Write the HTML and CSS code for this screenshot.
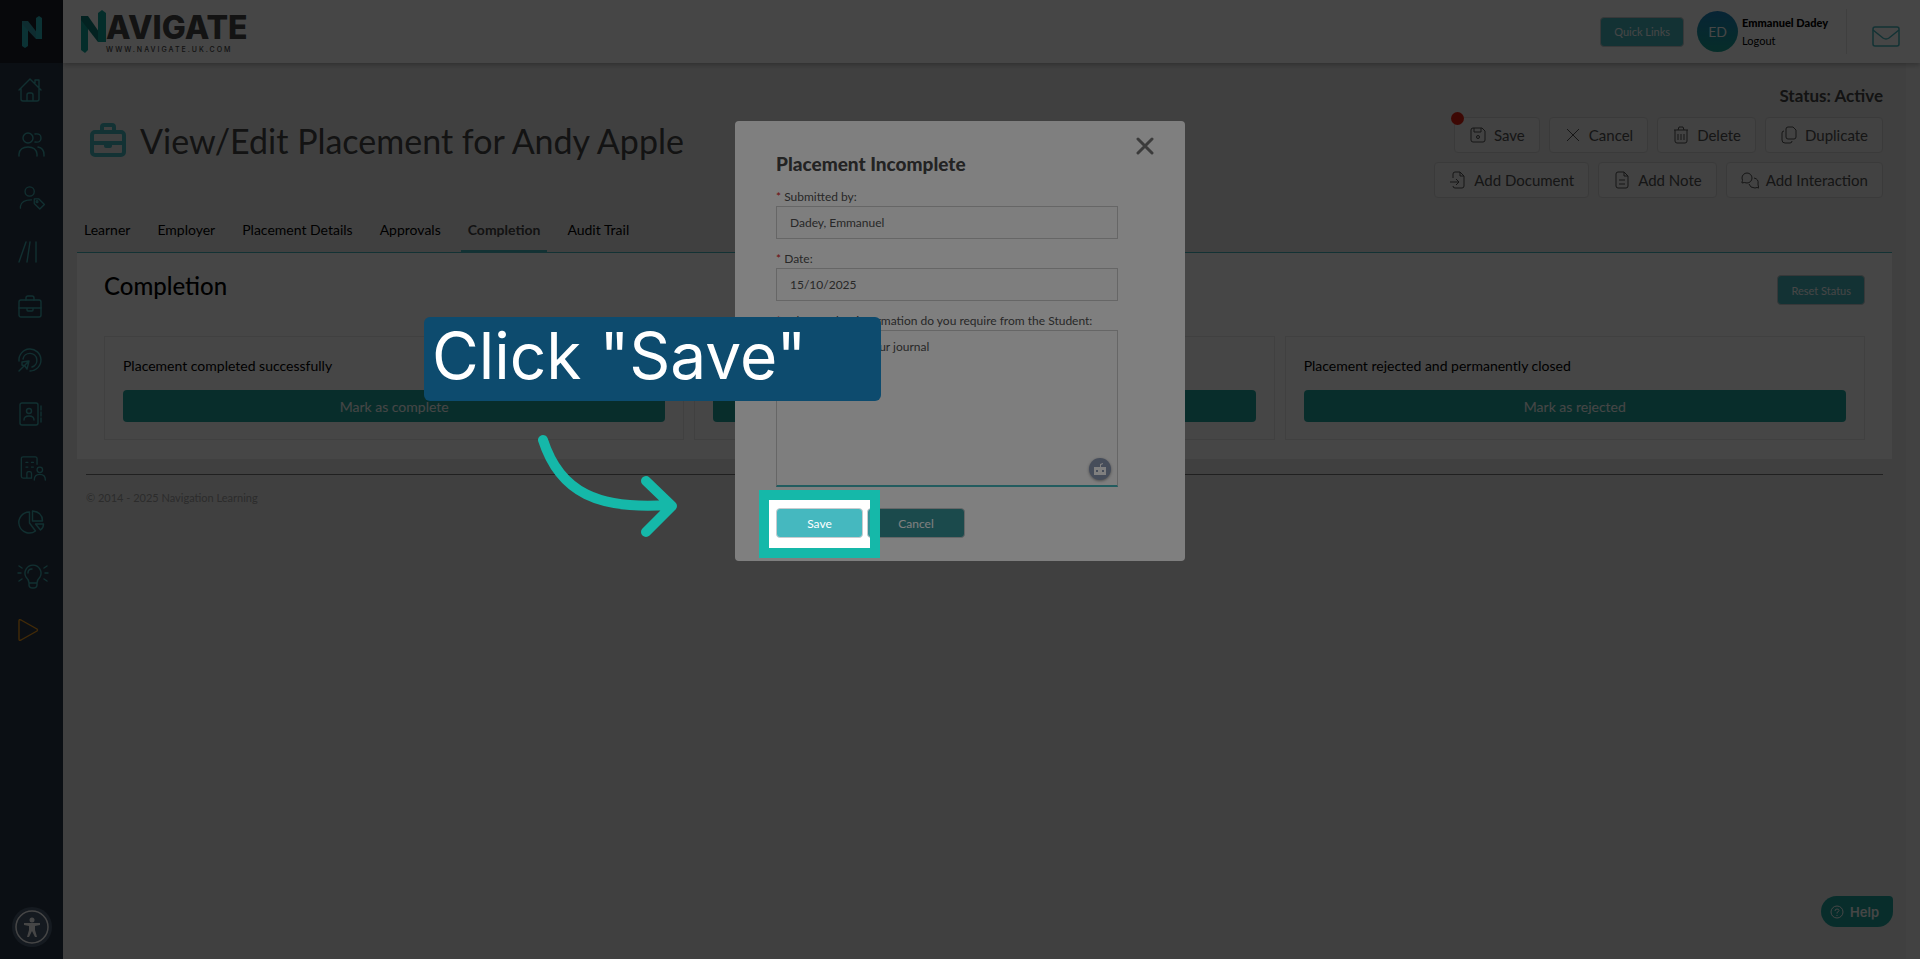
FILE: index.html
```
<!DOCTYPE html>
<html lang="en">
<head>
    <meta charset="UTF-8">
    <meta name="viewport" content="width=device-width, initial-scale=1.0">
    <title>Navigate - Placement</title>
    <link rel="stylesheet" href="styles.css">
</head>
<body>
    <nav class="sidebar">
        <a href="#" class="side-logo" aria-label="Navigate">
            <svg width="20" height="32" viewBox="0 0 20 32"><path fill="#2bb8c0" d="M0 5h6v25l-3 2-3-2z"/><path fill="#36a3b0" d="M0 5h6l14 18h-6L0 8z"/><path fill="#2bb8c0" d="M14 2l3-2 3 2v21h-6z"/></svg>
        </a>
        <a href="#" aria-label="Home"><svg viewBox="0 0 24 24"><path d="M1 12L12 1l11 11M3 10v11q0 2 2 2h14q2 0 2-2V10M9 23v-6q0-2 2-2h2q2 0 2 2v6M17 5V2h4v8"/></svg></a>
        <a href="#" aria-label="Users"><svg class="wide" viewBox="0 0 27 24"><circle cx="10" cy="6" r="5"/><path d="M1 24v-2q1-7 9-7t9 7v2M17 2q6-1 6 4t-6 4M20 15q6 1 6 8v1"/></svg></a>
        <a href="#" aria-label="Tags"><svg class="wide" viewBox="0 0 28 26"><circle cx="12" cy="6" r="5"/><path d="M2 24v-2q1-7 12-7M17 14h5l6 6-5 5-6-6z"/><circle cx="20" cy="17" r="1"/></svg></a>
        <a href="#" aria-label="Activities"><svg viewBox="0 0 24 24"><path d="M1 22L8 2M9 22L12 2M18 2v20"/></svg></a>
        <a href="#" aria-label="Placements"><svg viewBox="0 0 24 24"><rect x="1" y="6" width="22" height="17" rx="2"/><path d="M8 6V4q0-2 2-2h4q2 0 2 2v2M1 14h22M9 14v2q0 1 1 1h4q1 0 1-1v-2"/></svg></a>
        <a href="#" aria-label="Targets"><svg viewBox="0 0 24 24"><path d="M1 13A11 11 0 1 1 12 23M5 11a7 7 0 1 1 9 8M1 23l10-10M4 14l7-1-2 8-2-3-3-1z"/></svg></a>
        <a href="#" aria-label="Contacts"><svg viewBox="0 0 24 24"><rect x="2" y="1" width="18" height="22" rx="2"/><circle cx="11" cy="9" r="2.5"/><path d="M6 18q0-4 5-4t5 4M23 4v4M23 10v4M23 16v4"/></svg></a>
        <a href="#" aria-label="Employers"><svg class="wide" viewBox="0 0 28 26"><path d="M20 9V3q0-2-2-2H5Q3 1 3 3v19q0 2 2 2h9v-5q0-2-2-2h-1q-2 0-2 2v5M8 7h2M14 7h2M8 12h2M14 12h2"/><circle cx="23" cy="15" r="3"/><path d="M17 26q0-6 6-6t6 6"/></svg></a>
        <a href="#" aria-label="Reports"><svg class="wide" viewBox="0 0 26 24"><path d="M11 2a10.500 10.500 0 1 0 6 19l-6-8zM14 1v10h10Q24 2 14 1zM17 14h8q0 4-3 6z"/></svg></a>
        <a href="#" aria-label="Ideas"><svg class="bulb" viewBox="0 0 30 24"><path d="M11 19q0-3-3-6a8 8 0 1 1 14 0q-3 3-3 6zM11 19v2q0 3 4 3t4-3v-2M10 9q0-4 4-4M1 2l3 2M0 9h3M1 17l3-2M29 2l-3 2M30 9h-3M29 17l-3-2"/></svg></a>
        <a href="#" class="play" aria-label="Tour"><svg viewBox="0 0 24 24"><path d="M1 3q0-2 2-1l16 9q1 1 0 2L3 22q-2 1-2-1z"/></svg></a>
        <button class="access" aria-label="Accessibility">
            <svg width="40" height="40" viewBox="0 0 40 40"><circle cx="20" cy="20" r="16" fill="none" stroke="#fff" stroke-width="1.500"/><circle cx="20" cy="13" r="2.500" fill="#fff"/><path fill="#fff" d="M12 16h16v2l-5 1v4l2 7h-2l-3-6-3 6h-2l2-7v-4l-5-1z"/></svg>
        </button>
    </nav>

    <div class="page">
        <header class="topbar">
            <a href="#" class="brand">
                <svg width="25" height="44" viewBox="0 0 25 44"><path fill="#12a79c" d="M0 6h7v34l-3 3-4-3z"/><path fill="#0c7f78" d="M0 6h7l18 26h-8L0 10z"/><path fill="#12a79c" d="M17 3l4-3 4 3v29h-8z"/></svg>
                <span class="brand-text">
                    <span class="brand-name">AVIGATE</span>
                    <span class="brand-url">WWW.NAVIGATE.UK.COM</span>
                </span>
            </a>
            <button class="btn-small quick">Quick Links</button>
            <div class="avatar">ED</div>
            <div class="user">
                <strong>Emmanuel Dadey</strong>
                <a href="#">Logout</a>
            </div>
            <a href="#" class="mail" aria-label="Messages"><svg width="28" height="21" viewBox="0 0 28 21"><rect x="1" y="1" width="26" height="19" rx="2"/><path d="M1 4l10 8q3 2 6 0l10-8"/></svg></a>
        </header>

        <main class="content">
            <section class="heading">
                <h1>
                    <svg width="36" height="34" viewBox="0 0 36 34"><rect x="2" y="9" width="32" height="23" rx="3"/><path d="M12 8V4q0-2 2-2h8q2 0 2 2v4M2 20h32"/><path class="clasp" d="M14 20h8v3q0 2-2 2h-4q-2 0-2-2z"/></svg>
                    View/Edit Placement for Andy Apple
                </h1>
                <div class="tools">
                    <div class="status">Status: Active</div>
                    <div class="tool-row">
                        <button class="tool unsaved"><svg viewBox="0 0 18 18"><path d="M4 2h9l3 3v9q0 2-2 2H4q-2 0-2-2V4q0-2 2-2zM5 2v4h7V2"/><circle cx="9" cy="11" r="1.500"/></svg>Save</button>
                        <button class="tool"><svg viewBox="0 0 18 18"><path d="M3 3l12 12M15 3L3 15"/></svg>Cancel</button>
                        <button class="tool"><svg viewBox="0 0 18 18"><path d="M2 4h14M6 4l1-3h4l1 3M3 4v11q0 2 2 2h8q2 0 2-2V4M6 8v6M9 8v6M12 8v6"/></svg>Delete</button>
                        <button class="tool"><svg viewBox="0 0 18 18"><path d="M8 1h5l3 3v7q0 2-2 2H8q-2 0-2-2V3q0-2 2-2zM4 5Q2 5 2 7v7q0 3 3 3h5q2 0 2-2"/></svg>Duplicate</button>
                    </div>
                    <div class="tool-row">
                        <button class="tool"><svg viewBox="0 0 18 18"><path d="M4 7V3q0-2 2-2h5l4 4v10q0 2-2 2H6q-2 0-2-2M11 1v4h4M1 11h9M7 8l3 3-3 3"/></svg>Add Document</button>
                        <button class="tool"><svg viewBox="0 0 18 18"><path d="M5 1h6l4 4v10q0 2-2 2H5q-2 0-2-2V3q0-2 2-2zM11 1v4h4M6 9h6M6 13h6"/></svg>Add Note</button>
                        <button class="tool"><svg viewBox="0 0 18 18"><path d="M1 11q1-1 0-4a5 5 0 1 1 5 5q-3-1-5 0zM13 7q5 1 4 6 0 2 1 4-2-1-4 0-5 0-6-4"/></svg>Add Interaction</button>
                    </div>
                </div>
            </section>

            <nav class="tabs">
                <a href="#">Learner</a>
                <a href="#">Employer</a>
                <a href="#">Placement Details</a>
                <a href="#">Approvals</a>
                <a href="#" class="active">Completion</a>
                <a href="#">Audit Trail</a>
            </nav>

            <section class="panel">
                <div class="panel-head">
                    <h2>Completion</h2>
                    <button class="btn-small">Reset Status</button>
                </div>
                <div class="cards">
                    <div class="card">
                        <p>Placement completed successfully</p>
                        <button>Mark as complete</button>
                    </div>
                    <div class="card">
                        <p>Placement incomplete</p>
                        <button>Mark as incomplete</button>
                    </div>
                    <div class="card">
                        <p>Placement rejected and permanently closed</p>
                        <button>Mark as rejected</button>
                    </div>
                </div>
            </section>

            <footer>© 2014 - 2025 Navigation Learning</footer>
        </main>
        <button class="help"><svg width="14" height="14" viewBox="0 0 14 14"><circle cx="7" cy="7" r="6"/><path d="M5 6q0-2 2-2t2 1.500q0 1-2 2v1M7 10v1"/></svg>Help</button>
    </div>

    <div class="backdrop">
        <form class="modal">
            <button type="button" class="close" aria-label="Close"><svg width="18" height="18" viewBox="0 0 18 18"><path d="M2 2l14 14M16 2L2 16"/></svg></button>
            <h3>Placement Incomplete</h3>
            <label for="submitted"><i>*</i> Submitted by:</label>
            <input type="text" id="submitted" value="Dadey, Emmanuel">
            <label for="date"><i>*</i> Date:</label>
            <input type="text" id="date" value="15/10/2025">
            <label for="info"><i>*</i> What further information do you require from the Student:</label>
            <div class="area">
                <textarea id="info">Please update your journal</textarea>
                <span class="bot"><svg width="22" height="22" viewBox="0 0 22 22"><path fill="#fff" d="M5 9h6V6l3-1v1l-2 1v2h5v8H5z"/><path fill="#8c9ab5" d="M7 12h2v2H7zM13 12h2v2h-2z"/></svg></span>
            </div>
            <div class="actions">
                <div class="target">
                    <button type="button" class="btn-small">Save</button>
                    <span class="spotlight"></span>
                </div>
                <button type="button" class="btn-small cancel">Cancel</button>
            </div>
            <div class="callout">Click "Save"</div>
            <svg class="arrow" width="140" height="104" viewBox="0 0 140 104"><path d="M6 6C23 59 62 76 132 71M109 47l26 25-26 26"/></svg>
        </form>
    </div>
</body>
</html>
```
FILE: styles.css
```
* {
    box-sizing: border-box;
}

body {
    margin: 0;
    min-height: 100vh;
    display: flex;
    font-family: Lato, "Open Sans", sans-serif;
    font-size: 14px;
    color: #000;
    background: #f3f3f3;
}

button,
input,
textarea {
    font-family: inherit;
}

button {
    cursor: pointer;
    padding: 0;
    border: none;
}

a {
    color: inherit;
    text-decoration: none;
}

svg {
    display: block;
    flex-shrink: 0;
    fill: none;
}

/* sidebar */
.sidebar {
    width: 63px;
    flex-shrink: 0;
    display: flex;
    flex-direction: column;
    background: #2b3949;
}

.sidebar a {
    height: 54px;
    display: flex;
    align-items: center;
    padding-left: 18px;
}

.sidebar .side-logo {
    height: 63px;
    padding-left: 22px;
    background: #1b202a;
}

.sidebar a:not(.side-logo) svg {
    width: 24px;
    height: 24px;
    stroke: #40b0b5;
    stroke-width: 1.4px;
    stroke-linecap: round;
    stroke-linejoin: round;
    overflow: visible;
}

.sidebar svg.wide {
    width: 27px !important;
}

.sidebar svg.bulb {
    width: 30px !important;
}

.sidebar .play svg {
    stroke: #f49b1c !important;
}

.access {
    width: 40px;
    height: 40px;
    margin: auto auto 12px;
    border-radius: 50%;
    background: #4d5f76;
}

/* header */
.page {
    flex: 1;
    min-width: 0;
    display: flex;
    flex-direction: column;
}

.topbar {
    height: 63px;
    display: flex;
    align-items: center;
    padding-right: 20px;
    background: #fff;
    box-shadow: 0 2px 5px rgba(0, 0, 0, 0.25);
    position: relative;
}

.brand {
    display: flex;
    margin-left: 18px;
    margin-right: auto;
}

.brand-text {
    display: flex;
    flex-direction: column;
    font-family: Inter, sans-serif;
    color: #464646;
}

.brand-name {
    font-size: 32px;
    font-weight: 800;
    line-height: 36px;
}

.brand-url {
    font-size: 7px;
    font-weight: 500;
    line-height: 8px;
    letter-spacing: 2px;
}

.btn-small {
    height: 30px;
    padding: 0 13px;
    border: 1px solid #c8cccf;
    border-radius: 4px;
    background: #45b8bf;
    color: #fff;
    font-size: 11px;
}

.avatar {
    width: 41px;
    height: 41px;
    margin-left: 13px;
    border-radius: 50%;
    background: linear-gradient(#1d84c0, #16a596);
    color: #fff;
    display: flex;
    align-items: center;
    justify-content: center;
}

.user {
    display: flex;
    flex-direction: column;
    margin-left: 4px;
    margin-right: 18px;
    font-size: 11px;
    line-height: 18px;
}

.user strong {
    font-weight: 900;
}

.mail {
    height: 45px;
    display: flex;
    align-items: center;
    border-left: 1px solid #e8e8e8;
    padding-left: 25px;
    padding-top: 10px;
}

.mail svg {
    stroke: #45b8bf;
    stroke-width: 1.5px;
}

/* content */
.content {
    flex: 1;
    margin-right: 14px;
    padding: 20px 14px;
    background: #ebebeb;
}

.heading {
    display: flex;
    justify-content: space-between;
    min-height: 126px;
    padding: 0 9px 0 13px;
}

.heading h1 {
    display: flex;
    align-items: center;
    gap: 14px;
    height: 114px;
    margin: 0;
    font-size: 34px;
    font-weight: 400;
    color: #464646;
}

.heading h1 svg {
    stroke: #45b8bf;
    stroke-width: 4px;
}

.heading .clasp {
    fill: #45b8bf;
    stroke: none;
}

.tools {
    display: flex;
    flex-direction: column;
    align-items: flex-end;
    gap: 9px;
}

.status {
    font-size: 17px;
    font-weight: 700;
    line-height: 25px;
    color: #464646;
}

.tool-row {
    display: flex;
    gap: 9px;
}

.tool {
    height: 36px;
    display: flex;
    align-items: center;
    gap: 7px;
    padding: 0 14px;
    border: 1px solid #d6d6d6;
    border-radius: 4px;
    background: #f0f0f0;
    font-size: 15px;
    color: #505050;
    position: relative;
}

.tool svg {
    width: 18px;
    height: 18px;
    stroke: #505050;
}

.unsaved::before {
    content: "";
    position: absolute;
    left: -4px;
    top: -6px;
    width: 13px;
    height: 13px;
    border-radius: 50%;
    background: #e02010;
}

.tabs {
    display: flex;
    gap: 13px;
    height: 44px;
    border-bottom: 1px solid #45b8bf;
}

.tabs a {
    padding: 12px 7px 0;
    line-height: 18px;
}

.tabs .active {
    font-weight: 700;
    color: #464646;
    border-bottom: 2px solid #45b8bf;
}

.panel {
    padding: 18px 27px 19px;
    background: #fff;
}

.panel-head {
    display: flex;
    justify-content: space-between;
    height: 65px;
    padding-top: 4px;
}

.panel-head h2 {
    margin: 0;
    font-size: 24px;
    font-weight: 500;
    line-height: 22px;
}

.cards {
    display: grid;
    grid-template-columns: repeat(3, 1fr);
    gap: 10px;
}

.card {
    padding: 19px 18px 17px;
    border: 1px solid #ececec;
}

.card p {
    margin: 0 0 14px;
    line-height: 20px;
}

.card button {
    width: 100%;
    height: 32px;
    border-radius: 4px;
    background: #1ea79f;
    color: #fff;
    font-size: 14px;
}

footer {
    margin: 15px 9px 0;
    padding-top: 14px;
    border-top: 1px solid #777;
    font-size: 11px;
    line-height: 18px;
    color: #a0a0a0;
}

.help {
    position: fixed;
    right: 27px;
    bottom: 32px;
    display: flex;
    align-items: center;
    gap: 6px;
    height: 31px;
    padding: 0 14px 0 9px;
    border-radius: 16px 4px 16px 16px;
    background: #1ea79f;
    color: #fff;
    font-family: Inter, sans-serif;
    font-size: 13px;
    font-weight: 600;
}

.help svg {
    stroke: #fff;
}

/* dialog */
.backdrop {
    position: fixed;
    inset: 0;
    display: flex;
    justify-content: center;
    align-items: flex-start;
    padding-top: 121px;
    background: rgba(0, 0, 0, 0.45);
    overflow: hidden;
}

.modal {
    position: relative;
    width: 450px;
    padding: 32px 67px 23px 41px;
    border-radius: 4px;
    background: #fff;
    color: #505050;
}

.close {
    position: absolute;
    top: 16px;
    right: 31px;
    background: none;
}

.close svg {
    stroke: #777;
    stroke-width: 3px;
    stroke-linecap: round;
}

.modal h3 {
    margin: 0 0 12px;
    font-size: 19px;
    font-weight: 900;
    line-height: 22px;
    color: #464646;
}

.modal label {
    display: block;
    font-size: 12px;
    line-height: 19px;
}

.modal label i {
    font-style: normal;
    color: #e02020;
}

.modal input,
.modal textarea {
    display: block;
    width: 100%;
    border: 1px solid #ccc;
    background: #fcfcfc;
    font-size: 12px;
    color: #505050;
}

.modal input {
    height: 33px;
    margin-bottom: 10px;
    padding: 0 13px;
}

.area {
    position: relative;
}

.modal textarea {
    height: 157px;
    padding: 8px 13px;
    border-bottom: 2px solid #45b8bf;
    resize: none;
}

.bot {
    position: absolute;
    right: 7px;
    bottom: 7px;
    border-radius: 50%;
    background: #8c9ab5;
    box-shadow: 0 1px 3px rgba(0, 0, 0, 0.4);
}

.actions {
    display: flex;
    gap: 4px;
    margin-top: 21px;
}

.actions .btn-small {
    width: 87px;
    font-size: 12px;
}

.actions .cancel {
    width: 98px;
    background: #369499;
}

.target {
    position: relative;
}

/* dims everything outside the highlighted button */
.spotlight {
    position: absolute;
    inset: -8px -7px -10px;
    outline: 10px solid #15b8a9;
    box-shadow: 0 0 0 4000px rgba(0, 0, 0, 0.5);
}

.callout {
    position: absolute;
    left: -311px;
    top: 196px;
    width: 457px;
    height: 84px;
    padding-left: 8px;
    border-radius: 6px;
    background: #0d4b6e;
    color: #fff;
    font-family: Inter, sans-serif;
    font-size: 64px;
    line-height: 78px;
}

.arrow {
    position: absolute;
    left: -198px;
    top: 313px;
    stroke: #15b8a9;
    stroke-width: 10px;
    stroke-linecap: round;
    stroke-linejoin: round;
}
```
